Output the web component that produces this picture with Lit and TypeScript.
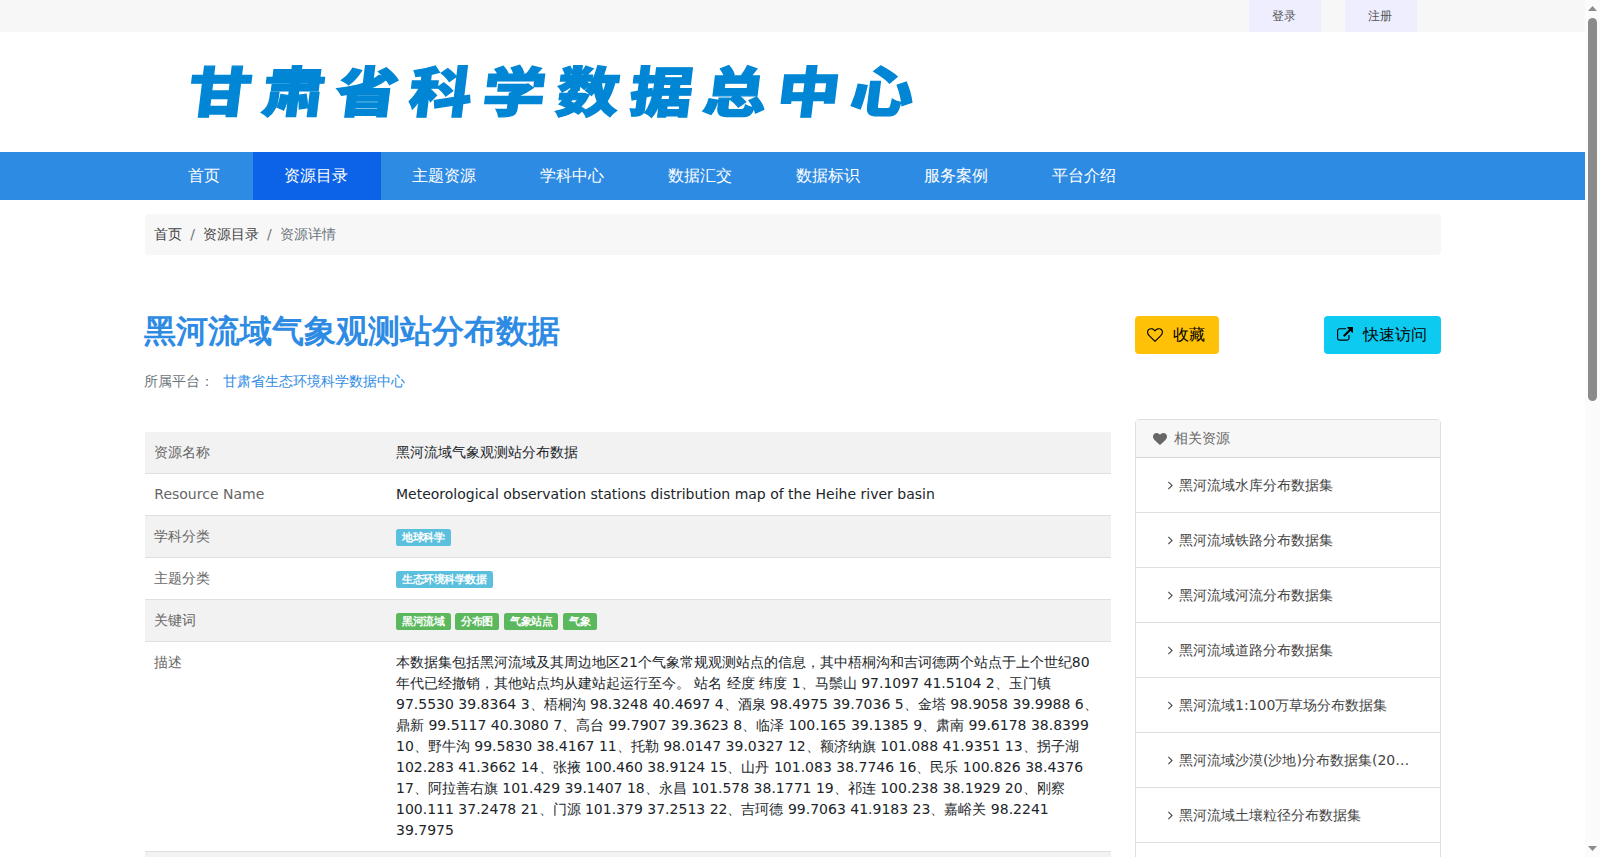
import { LitElement, html, css, svg } from "lit";
import { customElement } from "lit/decorators.js";

const NAV = ["首页", "资源目录", "主题资源", "学科中心", "数据汇交", "数据标识", "服务案例", "平台介绍"];

const DESCRIPTION =
  "本数据集包括黑河流域及其周边地区21个气象常规观测站点的信息，其中梧桐沟和吉诃德两个站点于上个世纪80年代已经撤销，其他站点均从建站起运行至今。 站名 经度 纬度 1、马鬃山 97.1097 41.5104 2、玉门镇 97.5530 39.8364 3、梧桐沟 98.3248 40.4697 4、酒泉 98.4975 39.7036 5、金塔 98.9058 39.9988 6、鼎新 99.5117 40.3080 7、高台 99.7907 39.3623 8、临泽 100.165 39.1385 9、肃南 99.6178 38.8399 10、野牛沟 99.5830 38.4167 11、托勒 98.0147 39.0327 12、额济纳旗 101.088 41.9351 13、拐子湖 102.283 41.3662 14、张掖 100.460 38.9124 15、山丹 101.083 38.7746 16、民乐 100.826 38.4376 17、阿拉善右旗 101.429 39.1407 18、永昌 101.578 38.1771 19、祁连 100.238 38.1929 20、刚察 100.111 37.2478 21、门源 101.379 37.2513 22、吉珂德 99.7063 41.9183 23、嘉峪关 98.2241 39.7975";

const RELATED = [
  "黑河流域水库分布数据集",
  "黑河流域铁路分布数据集",
  "黑河流域河流分布数据集",
  "黑河流域道路分布数据集",
  "黑河流域1:100万草场分布数据集",
  "黑河流域沙漠(沙地)分布数据集(20…",
  "黑河流域土壤粒径分布数据集",
];

const heartOutline = svg`<path d="M1664 596q0-81-21.5-143t-55-98.5-81.5-59.5-94-31-98-8-112 25.5-110.5 64-86.5 72-60 61.5q-18 22-49 22t-49-22q-24-28-60-61.5t-86.5-72-110.5-64-112-25.5-98 8-94 31-81.5 59.5-55 98.5-21.5 143q0 168 187 355l581 560 580-559q188-188 188-356zm128 0q0 221-229 450l-623 600q-18 18-44 18t-44-18l-624-602q-10-8-27.5-26t-55.5-65.5-68-97.5-53.5-121-23.5-138q0-220 127-344t351-124q62 0 126.5 21.5t120 58 95.5 68.5 76 68q36-36 76-68t95.5-68.5 120-58 126.5-21.5q224 0 351 124t127 344z"/>`;
const heartSolid = svg`<path d="M896 1664q-26 0-44-18l-624-602q-10-8-27.5-26t-55.5-65.5-68-97.5-53.5-121-23.5-138q0-220 127-344t351-124q62 0 126.5 21.5t120 58 95.5 68.5 76 68q36-36 76-68t95.5-68.5 120-58 126.5-21.5q224 0 351 124t127 344q0 221-229 450l-623 600q-18 18-44 18z"/>`;
const externalLink = svg`<path d="M1408 928v320q0 119-84.5 203.5t-203.5 84.5h-832q-119 0-203.5-84.5t-84.5-203.5v-832q0-119 84.5-203.5t203.5-84.5h704q14 0 23 9t9 23v64q0 14-9 23t-23 9h-704q-66 0-113 47t-47 113v832q0 66 47 113t113 47h832q66 0 113-47t47-113v-320q0-14 9-23t23-9h64q14 0 23 9t9 23zm384-864v512q0 26-19 45t-45 19-45-19l-176-176-652 652q-10 10-23 10t-23-10l-114-114q-10-10-10-23t10-23l652-652-176-176q-19-19-19-45t19-45 45-19h512q26 0 45 19t19 45z"/>`;

@customElement("app-root")
export class AppRoot extends LitElement {
  static styles = css`
    :host {
      display: flex;
      height: 857px;
      overflow: hidden;
      background: #fff;
      color: #212529;
      font: 14px/21px "DejaVu Sans", sans-serif;
    }
    * { box-sizing: border-box; }
    svg { display: block; fill: currentColor; flex: none; }
    .page { flex: 1; min-width: 0; height: 857px; overflow: hidden; }
    .container { width: 1296px; margin: 0 auto; }
    .topbar { height: 32px; background: #f7f7f7; }
    .account { display: flex; justify-content: flex-end; gap: 24px; padding-right: 24px; }
    .account span { width: 72px; height: 32px; padding-right: .5px; background: #eef; color: #555; font-size: 12px; line-height: 32px; text-align: center; }
    .brand { height: 120px; padding: 22px 0 0 44.5px; }
    .logo {
      display: block; width: max-content; white-space: nowrap;
      font: 900 63px/70px "Noto Sans CJK SC", sans-serif;
      letter-spacing: 10.6px; color: #0086d5;
      -webkit-text-stroke: 1.4px #0086d5;
      transform-origin: 0 50%;
      transform: skewX(-7deg) scaleY(.86);
    }
    .nav { height: 48px; background: #2e8be4; }
    .menu { display: flex; padding-left: 12px; }
    .menu span { padding: 0 32.25px 0 31.75px; font-size: 16px; line-height: 48px; color: #fff; }
    .menu .active { background: #0c63e7; }
    .crumbs { display: flex; margin-top: 14px; height: 41px; padding: 10px 10px 10px 9.8px; border-radius: 4px; background: #f7f7f7; color: #444; }
    .crumbs .sep, .crumbs .here { color: #6c757d; }
    .crumbs .sep { padding: 0 8px; }
    .columns { display: flex; gap: 24px; padding-top: 61px; }
    .main { width: 966px; }
    .side { width: 306px; }
    .title { margin: 0 0 0 -.2px; font-size: 32px; line-height: 30px; font-weight: 600; color: #2e8be4; }
    .owner { display: flex; gap: 8.2px; margin: 25px 0 0 -.2px; color: #6c757d; }
    .owner .link { color: #2e8be4; }
    .table { margin-top: 40px; }
    .row { display: grid; grid-template-columns: 25% 75%; border-bottom: 1px solid #dedfe0; }
    .row:nth-child(odd) { background: #f2f2f2; }
    .row > div { padding: 10px; }
    .row > .key { padding-left: 9.8px; color: #666; }
    .badge {
      display: inline; padding: .2em .6em .3em; font-size: 10.5px; line-height: 1; font-weight: 700;
      letter-spacing: -.48px;
      color: #fff; border-radius: .25em; vertical-align: baseline; background: #5bc0de;
    }
    .green { background: #5cb85c; }
    .actions { display: flex; justify-content: space-between; }
    .btn { display: flex; align-items: center; gap: 9.75px; height: 38px; padding: 0 13.5px 0 12.75px; border-radius: 4px; font-size: 16px; line-height: 24px; color: #000; }
    .fav { background: #ffc107; }
    .visit { background: #0dcaf0; gap: 10.4px; padding: 0 13.6px 0 13px; }
    .card { margin-top: 65px; border: 1px solid #dfdfdf; border-radius: 4px; }
    .card-head { display: flex; align-items: center; gap: 6.5px; height: 38px; padding: 0 17.5px; background: #f7f7f7; border-bottom: 1px solid #d8d8d8; color: #666; }
    .item { display: flex; align-items: center; gap: 6.5px; height: 55px; padding: 0 24px 0 32px; border-bottom: 1px solid #dfdfdf; color: #444; }
    .item .name { white-space: nowrap; }
    .scrollbar { width: 15px; height: 857px; background: #fbfbfb; display: flex; flex-direction: column; align-items: center; padding: 6px 0; color: #8b8b8b; }
    .thumb { width: 9px; height: 383px; margin-top: 7px; border-radius: 5px; background: #8b8b8b; }
    .down { margin-top: auto; }
  `;

  render() {
    return html`
      <div class="page">
        <div class="topbar"><div class="container account"><span>登录</span><span>注册</span></div></div>
        <div class="container brand"><span class="logo">甘肃省科学数据总中心</span></div>
        <div class="nav">
          <div class="container menu">
            ${NAV.map((n, i) => html`<span class=${i === 1 ? "active" : ""}>${n}</span>`)}
          </div>
        </div>
        <div class="container">
          <div class="crumbs">
            <span>首页</span><span class="sep">/</span><span>资源目录</span><span class="sep">/</span><span class="here">资源详情</span>
          </div>
          <div class="columns">
            <div class="main">
              <h2 class="title">黑河流域气象观测站分布数据</h2>
              <div class="owner"><span>所属平台：</span><span class="link">甘肃省生态环境科学数据中心</span></div>
              <div class="table">
                <div class="row"><div class="key">资源名称</div><div>黑河流域气象观测站分布数据</div></div>
                <div class="row"><div class="key">Resource Name</div><div>Meteorological observation stations distribution map of the Heihe river basin</div></div>
                <div class="row"><div class="key">学科分类</div><div><span class="badge">地球科学</span></div></div>
                <div class="row"><div class="key">主题分类</div><div><span class="badge">生态环境科学数据</span></div></div>
                <div class="row">
                  <div class="key">关键词</div>
                  <div>
                    <span class="badge green">黑河流域</span>
                    <span class="badge green">分布图</span>
                    <span class="badge green">气象站点</span>
                    <span class="badge green">气象</span>
                  </div>
                </div>
                <div class="row"><div class="key">描述</div><div>${DESCRIPTION}</div></div>
                <div class="row"><div class="key">&nbsp;</div><div></div></div>
              </div>
            </div>
            <div class="side">
              <div class="actions">
                <div class="btn fav"><svg width="16" height="16" viewBox="0 0 1792 1792">${heartOutline}</svg>收藏</div>
                <div class="btn visit"><svg width="16" height="16" viewBox="0 0 1792 1792">${externalLink}</svg>快速访问</div>
              </div>
              <div class="card">
                <div class="card-head"><svg width="14" height="14" viewBox="0 0 1792 1792">${heartSolid}</svg>相关资源</div>
                ${RELATED.map(
                  (r) => html`<div class="item">
                    <svg width="5" height="14" viewBox="0 0 640 1792"><path d="M595 960q0 13-10 23l-466 466q-10 10-23 10t-23-10l-50-50q-10-10-10-23t10-23l393-393-393-393q-10-10-10-23t10-23l50-50q10-10 23-10t23 10l466 466q10 10 10 23z"/></svg>
                    <span class="name">${r}</span>
                  </div>`
                )}
                <div class="item"></div>
              </div>
            </div>
          </div>
        </div>
      </div>
      <div class="scrollbar">
        <svg width="9" height="5" viewBox="0 0 9 5"><path d="M4.5 0L9 5H0z"/></svg>
        <div class="thumb"></div>
        <svg class="down" width="9" height="5" viewBox="0 0 9 5"><path d="M0 0H9L4.5 5z"/></svg>
      </div>
    `;
  }
}
